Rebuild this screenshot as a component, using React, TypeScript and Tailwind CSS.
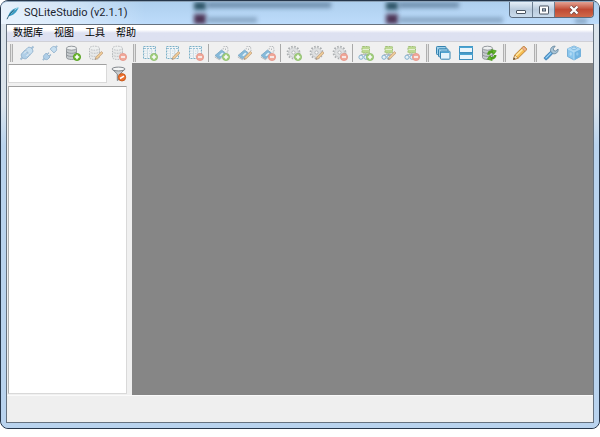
import type { ReactNode } from "react";

const menus = ["数据库", "视图", "工具", "帮助"];

const Svg = ({ children, faded = false }: { children: ReactNode; faded?: boolean }) => (
  <svg viewBox="0 0 16 16" className={faded ? "w-4 h-4 opacity-60" : "w-4 h-4"} fill="none" aria-hidden="true">
    {children}
  </svg>
);

// ---- badges in the lower right corner of an icon ----

const AddBadge = () => (
  <g>
    <circle cx="12" cy="12" r="3.6" fill="#6cba2c" stroke="#4f9a1a" strokeWidth="0.8" />
    <path d="M12 9.8v4.4M9.8 12h4.4" stroke="#fff" strokeWidth="1.6" />
  </g>
);

const RemoveBadge = () => (
  <g>
    <circle cx="12" cy="12" r="3.6" fill="#f07a62" stroke="#de5540" strokeWidth="0.8" />
    <path d="M10 12h4" stroke="#fff" strokeWidth="1.6" />
  </g>
);

const EditBadge = () => (
  <g>
    <path d="M7 14.5l.8-2.4 5.6-5.6 1.6 1.6-5.6 5.6z" fill="#eab15c" stroke="#a8703a" strokeWidth="0.8" />
    <path d="M7 14.5l.5-1.6 1.1 1.1z" fill="#555" />
  </g>
);

const badges = { add: <AddBadge />, edit: <EditBadge />, remove: <RemoveBadge /> };
type Badge = keyof typeof badges;

// ---- icon bodies ----

const DatabaseBody = ({ dashed = false }: { dashed?: boolean }) => (
  <g stroke="#8b9195" strokeWidth="0.9" strokeDasharray={dashed ? "1.5 1" : undefined}>
    <path d="M1.5 3.2v9.3c0 1.2 2.3 2 5 2s5-.8 5-2V3.2z" fill={dashed ? "#e3e5e6" : "#c6cbce"} />
    <ellipse cx="6.5" cy="3.2" rx="5" ry="2" fill="#eef0f1" />
    <path d="M1.5 6.3c0 1.2 2.3 2 5 2s5-.8 5-2M1.5 9.4c0 1.2 2.3 2 5 2s5-.8 5-2" />
  </g>
);

const TableBody = () => (
  <g>
    <rect x="1.5" y="1.5" width="12" height="12" fill="#f3f8fb" stroke="#2f86ad" strokeDasharray="2 1" />
    <path d="M2 3.500h11" stroke="#5ba3c6" strokeDasharray="2 1" />
    <path d="M2 6h11M2 8.500h11M2 11h11M5.5 4v9M9.5 4v9" stroke="#98bfd2" strokeWidth="0.7" strokeDasharray="1.5 1" />
  </g>
);

const IndexBody = () => (
  <g>
    <path d="M1 10.500l6.500-5.500 4 3-6 6z" fill="#3f96cc" stroke="#2c76a5" strokeWidth="0.8" />
    <path d="M5.200 10.200l3-2.700 1.400 1-2.900 2.800z" fill="#d9f0fc" />
    <path d="M.8 12l4.700 2.800 2-2" stroke="#8b9195" strokeWidth="0.900" />
    <path d="M9 4.500l.8-3h3.700l.7 5.500h-2M11.500 3.500v2" stroke="#8f9599" strokeDasharray="1.5 1" />
  </g>
);

const GearBody = () => (
  <g stroke="#80868a">
    <circle cx="7.5" cy="7.5" r="6" strokeWidth="1.8" strokeDasharray="1.6 1.540" />
    <circle cx="7.5" cy="7.5" r="4.8" fill="#d3d6d8" strokeWidth="0.7" strokeDasharray="2 0.800" />
    <circle cx="7.5" cy="7.5" r="1.6" fill="#fff" strokeWidth="0.8" />
  </g>
);

const ViewBody = () => (
  <g>
    <rect x="4" y="1.5" width="7.500" height="6.500" rx="0.8" fill="#9ccb54" stroke="#6b9d29" strokeDasharray="2 0.8" />
    <path d="M4.500 4.500h6.500" stroke="#dcefbb" />
    <path d="M7.5 8v2M3 11V9.500h8.500V11" stroke="#8b9195" strokeWidth="0.9" />
    <circle cx="3" cy="12.200" r="2.100" fill="#e1f1fb" stroke="#3a84b5" />
    <circle cx="8" cy="12.200" r="2.100" fill="#e1f1fb" stroke="#3a84b5" />
  </g>
);

const DatabaseIcon = ({ badge, faded }: { badge: Badge; faded?: boolean }) => (
  <Svg faded={faded}><DatabaseBody dashed={faded} />{badges[badge]}</Svg>
);
const TableIcon = ({ badge }: { badge: Badge }) => <Svg faded><TableBody />{badges[badge]}</Svg>;
const IndexIcon = ({ badge }: { badge: Badge }) => <Svg faded><IndexBody />{badges[badge]}</Svg>;
const GearIcon = ({ badge }: { badge: Badge }) => <Svg faded><GearBody />{badges[badge]}</Svg>;
const ViewIcon = ({ badge }: { badge: Badge }) => <Svg faded><ViewBody />{badges[badge]}</Svg>;

const ConnectIcon = () => (
  <Svg faded>
    <path d="M1.500 14.500l2.500-2.500M12 4l2.500-2.500" stroke="#6f9cc2" strokeWidth="1.800" />
    <path d="M2.400 9l3.400-3.800 5 5L7.400 13.600c-3 1-6-1.800-5-4.600z" fill="#84b9e2" stroke="#5288b5" strokeWidth="0.900" />
    <path d="M6.400 5L9 2.400c2.600-1 5.700 2 4.700 4.700L11 9.700z" fill="#acd4f1" stroke="#5288b5" strokeWidth="0.900" />
    <path d="M5 8.500l2.500-2.500M7.500 11l2.800-2.800" stroke="#e6f4fd" />
  </Svg>
);

const DisconnectIcon = () => (
  <Svg faded>
    <path d="M0.800 15.200l2-2M13.200 2.800l2-2" stroke="#6f9cc2" strokeWidth="1.800" />
    <path d="M1.600 10.800l2.500-2.700 3.900 3.900-2.500 2.500c-2.300.8-4.700-1.400-3.900-3.700z" fill="#84b9e2" stroke="#5288b5" strokeWidth="0.900" />
    <path d="M8.200 4.100l2.500-2.500c2.300-.8 4.600 1.400 3.800 3.700L12 7.900z" fill="#acd4f1" stroke="#5288b5" strokeWidth="0.900" />
    <path d="M5.500 9.200L7 7.700M7.400 11l1.500-1.500" stroke="#5288b5" strokeWidth="1.200" />
  </Svg>
);

const CascadeIcon = () => (
  <Svg>
    <rect x="1.500" y="1.500" width="9.500" height="8" rx="0.800" fill="#9fd0ea" stroke="#3583b0" />
    <rect x="3.500" y="3.800" width="9.500" height="8" rx="0.800" fill="#9fd0ea" stroke="#3583b0" />
    <rect x="5.500" y="6.200" width="9.500" height="8" rx="0.800" fill="#e4f3fb" stroke="#3583b0" />
    <path d="M6 7.300h8.500" stroke="#4da3d2" strokeWidth="1.400" />
  </Svg>
);

const TileIcon = () => (
  <Svg>
    <rect x="1.500" y="1.500" width="13" height="6" fill="#e9f5fc" stroke="#3f90be" />
    <rect x="1.500" y="8.500" width="13" height="6" fill="#e9f5fc" stroke="#3f90be" />
    <path d="M1 2.300h14M1 9.300h14" stroke="#4ba4d2" strokeWidth="1.400" />
  </Svg>
);

const RefreshDbIcon = () => (
  <Svg>
    <DatabaseBody />
    <circle cx="10.800" cy="10" r="3.400" stroke="#4f9f1e" strokeWidth="2.600" strokeDasharray="8 2.680" />
    <path d="M10.500 4.500l4.800 1.300-2.700 3.800z" fill="#63b82a" stroke="#3f8d15" strokeWidth="0.600" />
    <path d="M11.200 15.600l-4.900-1.400 2.800-3.700z" fill="#63b82a" stroke="#3f8d15" strokeWidth="0.600" />
  </Svg>
);

const PencilIcon = () => (
  <Svg>
    <path d="M1.500 14.500l1.300-4.600L11 1.800c1.200-1.100 4.400 2 3.300 3.300l-8.200 8.100z" fill="#f6bd50" stroke="#b57b30" strokeWidth="0.900" />
    <path d="M4 10.800L12 3" stroke="#ffe7a2" strokeWidth="1.600" />
    <path d="M9.700 3.100l3.300 3.300 1.300-1.300c.8-1.300-2.300-4.200-3.300-3.300z" fill="#f0b294" stroke="#b57b30" strokeWidth="0.500" />
    <path d="M1.500 14.500l1.300-4.600 3.300 3.300z" fill="#f6e5c4" stroke="#b57b30" strokeWidth="0.600" />
    <path d="M1.200 14.800l.7-2.200 1.500 1.500z" fill="#444" />
  </Svg>
);

const WrenchIcon = () => (
  <Svg>
    <path d="M7.900 6l2.200 2.200-6 6.200c-1.500 1.300-3.700-.9-2.400-2.400z" fill="#56a3da" stroke="#3874a6" strokeWidth="0.800" />
    <path d="M3 12.900l5.400-5.600" stroke="#b4def8" />
    <path d="M7.700 6.500c-.8-2.600 1-5.600 4.500-5.400l-1.900 2.600.5 1.900 1.900.4 2.400-2c.5 3.300-2.400 5.400-5 4.700z" fill="#a9c4d6" stroke="#61839b" strokeWidth="0.800" />
  </Svg>
);

const CubeIcon = () => (
  <Svg>
    <path d="M8 1l6.500 2.800v7.700L8 15l-6.500-3.500V3.800z" fill="#8ac6ed" stroke="#66a4d1" strokeWidth="0.800" />
    <path d="M8 1l6.500 2.800L8 7 1.500 3.800z" fill="#a9d6f3" />
    <path d="M8 7l6.500-3.200v7.700L8 15z" fill="#70b3e1" />
    <path d="M1.500 3.800L8 7l6.500-3.200M8 7v8" stroke="#c7e6f9" strokeWidth="0.700" />
    <ellipse cx="8" cy="3.300" rx="2.400" ry="1.200" fill="#c0e3f8" stroke="#66a4d1" strokeWidth="0.600" />
    <ellipse cx="4.700" cy="9" rx="1.200" ry="1.800" fill="#b2dbf5" />
    <ellipse cx="11.300" cy="9" rx="1.200" ry="1.800" fill="#91c8ec" />
  </Svg>
);

const FilterIcon = () => (
  <Svg>
    <path d="M1 3l5.300 5v6.500l2.800-1.800V8L14 3z" fill="#c7cbce" stroke="#757b80" strokeWidth="0.900" />
    <ellipse cx="7.500" cy="3" rx="6.500" ry="1.900" fill="#f5f6f6" stroke="#757b80" strokeWidth="0.900" />
    <circle cx="11" cy="11.300" r="3.700" fill="#ed7030" stroke="#c0500f" strokeWidth="0.800" />
    <path d="M9 12.500l4-2.400" stroke="#fff" strokeWidth="1.500" />
  </Svg>
);

const FeatherIcon = () => (
  <svg viewBox="0 0 14 14" className="w-3.5 h-3.5 shrink-0" fill="none" aria-hidden="true">
    <path d="M2.200 10.500C3 6 7 2 13 1.200 11.500 4 9.500 8.500 4 10z" fill="#3a9cc4" />
    <path d="M4.500 8C7 5 10 2.500 13 1.200" stroke="#bde6f3" strokeWidth="0.900" />
    <path d="M1 13.200C2.500 9.500 5 6.500 8.500 4" stroke="#20566e" strokeWidth="0.900" />
  </svg>
);

type Tool = { label: string; icon: ReactNode; disabled?: boolean };

const database: Tool[] = [
  { label: "Connect", icon: <ConnectIcon />, disabled: true },
  { label: "Disconnect", icon: <DisconnectIcon />, disabled: true },
  { label: "Add database", icon: <DatabaseIcon badge="add" /> },
  { label: "Edit database", icon: <DatabaseIcon badge="edit" faded />, disabled: true },
  { label: "Remove database", icon: <DatabaseIcon badge="remove" faded />, disabled: true },
];
const table: Tool[] = [
  { label: "Create table", icon: <TableIcon badge="add" />, disabled: true },
  { label: "Edit table", icon: <TableIcon badge="edit" />, disabled: true },
  { label: "Drop table", icon: <TableIcon badge="remove" />, disabled: true },
];
const index: Tool[] = [
  { label: "Create index", icon: <IndexIcon badge="add" />, disabled: true },
  { label: "Edit index", icon: <IndexIcon badge="edit" />, disabled: true },
  { label: "Drop index", icon: <IndexIcon badge="remove" />, disabled: true },
];
const trigger: Tool[] = [
  { label: "Create trigger", icon: <GearIcon badge="add" />, disabled: true },
  { label: "Edit trigger", icon: <GearIcon badge="edit" />, disabled: true },
  { label: "Drop trigger", icon: <GearIcon badge="remove" />, disabled: true },
];
const view: Tool[] = [
  { label: "Create view", icon: <ViewIcon badge="add" />, disabled: true },
  { label: "Edit view", icon: <ViewIcon badge="edit" />, disabled: true },
  { label: "Drop view", icon: <ViewIcon badge="remove" />, disabled: true },
];
const windows: Tool[] = [
  { label: "Cascade windows", icon: <CascadeIcon /> },
  { label: "Tile windows", icon: <TileIcon /> },
  { label: "Refresh schema", icon: <RefreshDbIcon /> },
];
const editor: Tool[] = [{ label: "Open SQL editor", icon: <PencilIcon /> }];
const config: Tool[] = [
  { label: "Settings", icon: <WrenchIcon /> },
  { label: "Plugins", icon: <CubeIcon /> },
];

const Tools = ({ items }: { items: Tool[] }) => (
  <>
    {items.map((t) => (
      <button
        key={t.label}
        type="button"
        aria-label={t.label}
        disabled={t.disabled}
        className="w-[23px] h-[21px] shrink-0 flex items-center justify-center"
      >
        {t.icon}
      </button>
    ))}
  </>
);

const Grip = () => (
  <div className="w-2 h-[18px] shrink-0 flex justify-center">
    <div className="w-[3px] border-x border-[#b0b0b0] bg-[#e2e2e2]" />
  </div>
);

const Separator = () => (
  <div className="w-[3px] h-[18px] shrink-0 flex justify-center">
    <div className="w-px bg-[#a9a9a9]" />
  </div>
);

// desktop items that shine through the glass title bar
const Glass = () => (
  <div className="absolute inset-0 overflow-hidden rounded-t-md" aria-hidden="true">
    <div className="absolute left-0 top-0 w-36 h-full bg-gradient-to-r from-white/70 via-white/40 to-transparent" />
    <div className="absolute left-[193px] top-0 w-3 h-2 bg-[#2d5366] blur-[2px]" />
    <div className="absolute left-[206px] top-0 w-[124px] h-1.5 bg-[#496886]/60 blur-[2px]" />
    <div className="absolute left-[193px] top-3 w-3 h-2.5 bg-[#4d3555] blur-[2px]" />
    <div className="absolute left-[206px] top-[15px] w-[50px] h-1.5 bg-[#6c8aa8]/60 blur-[2px]" />
    <div className="absolute left-[385px] top-0 w-3 h-2 bg-[#2d5366] blur-[2px]" />
    <div className="absolute left-[398px] top-0 w-[60px] h-1.5 bg-[#496886]/60 blur-[2px]" />
    <div className="absolute left-[385px] top-3 w-3 h-2.5 bg-[#4d3555] blur-[2px]" />
    <div className="absolute left-[398px] top-[15px] w-[104px] h-1.5 bg-[#6c8aa8]/60 blur-[2px]" />
    <div className="absolute right-3 top-4 w-3 h-1.5 bg-[#6c8aa8]/60 blur-[2px]" />
  </div>
);

const TitleBar = () => (
  <header className="relative h-[23px] shrink-0 flex items-start justify-between rounded-t-md border-t border-[#8da3b8] bg-gradient-to-b from-[#aecfee] to-[#bddcfb]">
    <Glass />
    <div className="relative flex items-center gap-1 pl-[5px] h-[22px]">
      <FeatherIcon />
      <h1 className="text-[11px] leading-4 text-[#1b2430] whitespace-nowrap font-[Roboto,sans-serif]">
        SQLiteStudio (v2.1.1)
      </h1>
    </div>
    <div className="relative flex h-4 mr-[5px] rounded-b border border-t-0 border-[#5a6b7e] overflow-hidden">
      <button type="button" aria-label="Minimize" className="w-[23px] flex items-center justify-center border-r border-[#6c7e91] bg-gradient-to-b from-[#e5eef7] via-[#b9cadc] to-[#cbdcec]">
        <svg viewBox="0 0 12 10" className="w-3 h-2.5" aria-hidden="true">
          <rect x="1.500" y="5.500" width="9" height="3" rx="0.500" fill="#fff" stroke="#4a5562" />
        </svg>
      </button>
      <button type="button" aria-label="Maximize" className="w-[22px] flex items-center justify-center border-r border-[#6c7e91] bg-gradient-to-b from-[#e5eef7] via-[#b9cadc] to-[#cbdcec]">
        <svg viewBox="0 0 12 10" className="w-3 h-2.5" aria-hidden="true">
          <rect x="1.500" y="1" width="9" height="8" rx="0.500" fill="#fff" stroke="#4a5562" />
          <rect x="4.500" y="3.800" width="3" height="2.200" fill="#b9c9da" stroke="#4a5562" />
        </svg>
      </button>
      <button type="button" aria-label="Close" className="w-[38px] flex items-center justify-center bg-gradient-to-b from-[#e3a193] via-[#c04a34] to-[#d0694a]">
        <svg viewBox="0 0 12 10" className="w-3 h-2.5" aria-hidden="true">
          <path d="M2.500 1.500l7 7M9.500 1.500l-7 7" stroke="#6a4545" strokeWidth="3.600" />
          <path d="M2.500 1.500l7 7M9.500 1.500l-7 7" stroke="#fff" strokeWidth="2.300" />
        </svg>
      </button>
    </div>
  </header>
);

const App = () => {
  return (
    <div className="h-screen flex flex-col bg-white pb-2 font-['Liberation_Sans','Noto_Sans_CJK_SC',sans-serif]">
      <div className="flex-1 min-h-0 flex flex-col rounded-lg border border-[#26364a] bg-[#b9d3ee]">
        <TitleBar />

        <div className="flex-1 min-h-0 flex flex-col px-[5px] pb-[5px] bg-gradient-to-b from-[#dbe4ec] from-20% to-[#b9d3ee] to-30% rounded-b-lg">
          <div className="flex-1 min-h-0 flex flex-col border border-[#66727f] bg-[#f0f0f0]">
            <nav className="h-4 shrink-0 flex items-center gap-[11px] pl-1.5 bg-gradient-to-b from-white from-30% to-[#dde1f1] to-50%">
              {menus.map((m) => (
                <button key={m} type="button" className="text-[10px] leading-4 text-black whitespace-nowrap">
                  {m}
                </button>
              ))}
            </nav>

            <div role="toolbar" aria-label="Main" className="shrink-0 flex items-center border-t border-[#d0d0d6] overflow-hidden">
              <Grip />
              <Tools items={database} />
              <Grip />
              <Tools items={table} />
              <Separator />
              <Tools items={index} />
              <Separator />
              <Tools items={trigger} />
              <Separator />
              <Tools items={view} />
              <Grip />
              <Tools items={windows} />
              <Grip />
              <Tools items={editor} />
              <Grip />
              <Tools items={config} />
            </div>

            <main className="flex-1 min-h-0 flex">
              <aside className="w-[125px] shrink-0 flex flex-col gap-[3px] pl-px pr-[5px] pt-px pb-px">
                <div className="flex items-center justify-between">
                  <input
                    type="text"
                    aria-label="Filter databases"
                    className="w-[99px] h-[19px] px-1 text-[10px] bg-white border border-[#d9d9d9] border-t-[#a0a0a0] outline-none"
                  />
                  <button type="button" aria-label="Clear filter" className="w-4 h-4">
                    <FilterIcon />
                  </button>
                </div>
                <div className="flex-1 bg-white border border-[#d9d9d9] border-t-[#a0a0a0] border-l-[#b0b0b0]" />
              </aside>
              <section className="flex-1 bg-[#868686]" aria-label="Workspace" />
            </main>

            <footer className="h-[27px] shrink-0 border-t border-[#fafafa] bg-[#efefef]" />
          </div>
        </div>
      </div>
    </div>
  );
};

export default App;
